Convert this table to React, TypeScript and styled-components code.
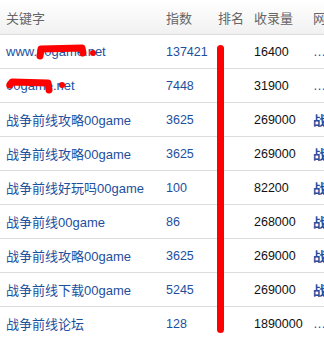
import styled, { createGlobalStyle } from "styled-components";

const GlobalStyle = createGlobalStyle`
  html, body {
    margin: 0;
    padding: 0;
    background: #fff;
  }
  body {
    font-family: "Liberation Sans", "Noto Sans CJK SC", sans-serif;
  }
`;

const rows = [
  { keyword: "www.00game.net", index: "137421", count: "16400", net: "…" },
  { keyword: "00game.net", index: "7448", count: "31900", net: "…" },
  { keyword: "战争前线攻略00game", index: "3625", count: "269000", net: "战" },
  { keyword: "战争前线攻略00game", index: "3625", count: "269000", net: "战" },
  { keyword: "战争前线好玩吗00game", index: "100", count: "82200", net: "战" },
  { keyword: "战争前线00game", index: "86", count: "268000", net: "战" },
  { keyword: "战争前线攻略00game", index: "3625", count: "269000", net: "战" },
  { keyword: "战争前线下载00game", index: "5245", count: "269000", net: "战" },
  { keyword: "战争前线论坛", index: "128", count: "1890000", net: "…" },
];

const App = () => {
  return (
    <>
      <GlobalStyle />
      <Page>
        <Table>
          <HeadRow>
            <HeadCell>关键字</HeadCell>
            <HeadCell>指数</HeadCell>
            <HeadCell>排名</HeadCell>
            <HeadCell>收录量</HeadCell>
            <HeadCell>网</HeadCell>
          </HeadRow>
          {rows.map((row, i) => (
            <Row key={i}>
              <Cell $blue>{row.keyword}</Cell>
              <Cell $blue $num>
                {row.index}
              </Cell>
              <Cell />
              <Cell $num>{row.count}</Cell>
              <Cell $blue $bold={row.net === "战"}>
                {row.net}
              </Cell>
            </Row>
          ))}
        </Table>
        <Marks width="324" height="337" viewBox="0 0 324 337">
          <path
            d="M40 56 L41 49 L82 48 L83 53"
            stroke="#ff0000"
            strokeWidth="7"
            strokeLinecap="round"
            strokeLinejoin="round"
            fill="none"
          />
          <circle cx="93" cy="53" r="3" fill="#ff0000" />
          <path
            d="M10 85 L12 82 L48 83 L49 90"
            stroke="#ff0000"
            strokeWidth="7"
            strokeLinecap="round"
            strokeLinejoin="round"
            fill="none"
          />
          <circle cx="62" cy="85" r="3" fill="#ff0000" />
        </Marks>
        <RedLine />
      </Page>
    </>
  );
};

const Page = styled.div`
  position: relative;
  width: 324px;
  height: 337px;
  overflow: hidden;
`;

const Table = styled.div`
  display: flex;
  flex-direction: column;
  width: 380px;
`;

const columns = "160px 52px 36px 59px 1fr";

const HeadRow = styled.div`
  display: grid;
  grid-template-columns: ${columns};
  height: 34px;
  align-items: center;
  background: linear-gradient(#ffffff, #f1f1f1);
  border-bottom: 1px solid #dcdcdc;
`;

const HeadCell = styled.div`
  padding-left: 6px;
  font-size: 13px;
  color: #666;
  white-space: nowrap;
`;

const Row = styled.div`
  display: grid;
  grid-template-columns: ${columns};
  height: 33px;
  align-items: center;
  border-bottom: 1px solid #dcdcdc;
`;

const Cell = styled.div<{ $blue?: boolean; $num?: boolean; $bold?: boolean }>`
  padding-left: 6px;
  font-size: ${(p) => (p.$num ? "12.5px" : "13px")};
  font-weight: ${(p) => (p.$bold ? 700 : 400)};
  color: ${(p) => (p.$blue ? "#1c4f9e" : "#111")};
  white-space: nowrap;
`;

const Marks = styled.svg`
  position: absolute;
  top: 0;
  left: 0;
  pointer-events: none;
`;

const RedLine = styled.div`
  position: absolute;
  left: 217px;
  top: 45px;
  width: 7px;
  height: 288px;
  border-radius: 4px;
  background: #ff0000;
`;

export default App;
